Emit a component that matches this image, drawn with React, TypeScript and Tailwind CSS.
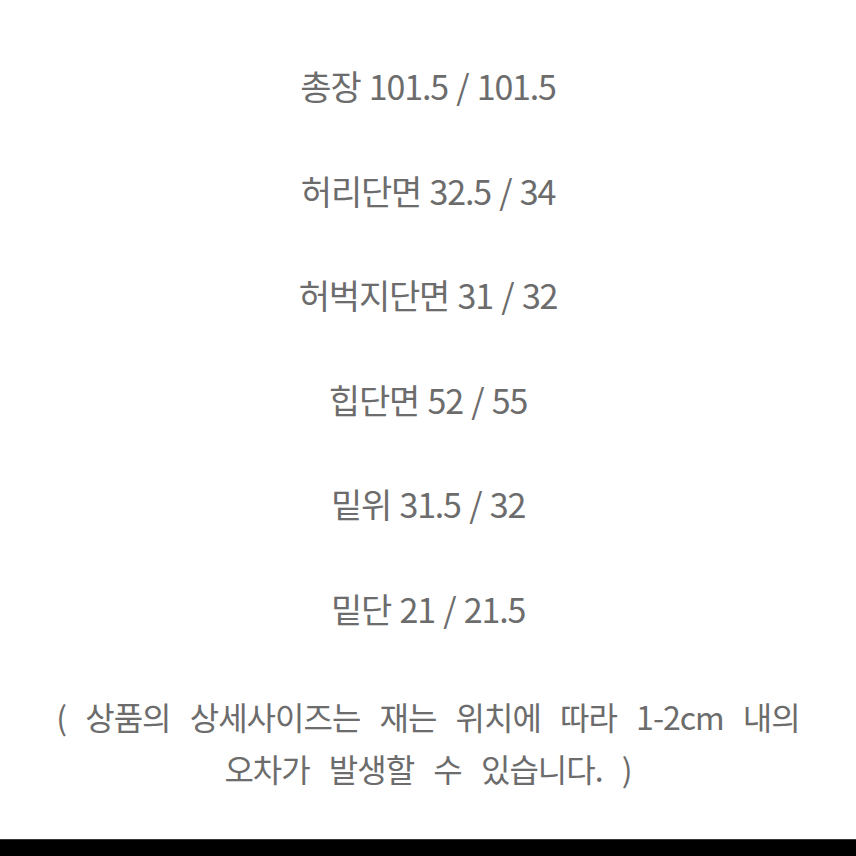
const sizes = [
  "총장 101.5 / 101.5",
  "허리단면 32.5 / 34",
  "허벅지단면 31 / 32",
  "힙단면 52 / 55",
  "밑위 31.5 / 32",
  "밑단 21 / 21.5",
]

export default function App() {
  return (
    <div
      className="flex h-[856px] flex-col bg-white text-[#6c6c6c]"
      style={{ fontFamily: '"Noto Sans CJK KR", "Noto Sans", sans-serif' }}
    >
      <div className="flex flex-col items-center pt-[34px]">
        {sizes.map((line) => (
          <div key={line} className="text-[34px] leading-[104.6px] tracking-[-1.2px] [word-spacing:2px]">
            {line}
          </div>
        ))}
      </div>

      <div className="mt-[28px] flex flex-col items-center text-[32px] leading-[52px] tracking-[-1px] [word-spacing:13px]">
        <div>( 상품의 상세사이즈는 재는 위치에 따라 1-2cm 내의</div>
        <div>오차가 발생할 수 있습니다. )</div>
      </div>

      <div className="mt-auto h-[17px] border-t border-[#3a3a3a] bg-black" />
    </div>
  )
}
